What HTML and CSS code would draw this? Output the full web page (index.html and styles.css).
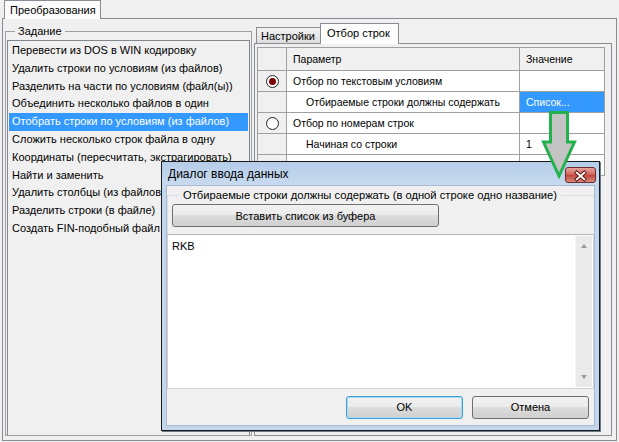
FILE: index.html
```html
<!DOCTYPE html>
<html>
<head>
<meta charset="utf-8">
<link rel="stylesheet" href="styles.css">
</head>
<body>
<div class="app">
  <div class="main-tabs">
    <div class="main-tab">Преобразования</div>
  </div>
  <div class="main-page">
    <div class="task-group">
      <div class="group-label">Задание</div>
      <ul class="task-list">
        <li>Перевести из DOS в WIN кодировку</li>
        <li>Удалить строки по условиям (из файлов)</li>
        <li>Разделить на части по условиям (файл(ы))</li>
        <li>Объединить несколько файлов в один</li>
        <li class="selected">Отобрать строки по условиям (из файлов)</li>
        <li>Сложить несколько строк файла в одну</li>
        <li>Координаты (пересчитать, экстрагировать)</li>
        <li>Найти и заменить</li>
        <li>Удалить столбцы (из файлов)</li>
        <li>Разделить строки (в файле)</li>
        <li>Создать FIN-подобный файл</li>
      </ul>
    </div>
    <div class="settings">
      <div class="sub-tabs">
        <div class="sub-tab">Настройки</div>
        <div class="sub-tab active">Отбор строк</div>
      </div>
      <div class="sub-page">
        <table class="grid">
          <colgroup><col class="c1"><col class="c2"><col class="c3"></colgroup>
          <tr class="head"><td class="ind"></td><td>Параметр</td><td>Значение</td></tr>
          <tr><td class="ind"><span class="radio on"></span></td><td>Отбор по текстовым условиям</td><td></td></tr>
          <tr><td class="ind"></td><td class="sub">Отбираемые строки должны содержать</td><td class="sel">Список...</td></tr>
          <tr><td class="ind"><span class="radio"></span></td><td>Отбор по номерам строк</td><td></td></tr>
          <tr><td class="ind"></td><td class="sub">Начиная со строки</td><td>1</td></tr>
          <tr><td class="ind"></td><td class="sub">Заканчивая строкой</td><td>1</td></tr>
        </table>
      </div>
    </div>
  </div>

  <div class="dialog">
    <div class="titlebar">
      <span class="title">Диалог ввода данных</span>
      <span class="close">
        <svg width="31" height="16" viewBox="0 0 31 16"><path d="M11.5 4.5 L19.5 11.5 M19.5 4.5 L11.5 11.5" stroke="#5a1a1a" stroke-width="4" stroke-linecap="square"/><path d="M11.5 4.5 L19.5 11.5 M19.5 4.5 L11.5 11.5" stroke="#fff" stroke-width="2" stroke-linecap="square"/></svg>
      </span>
    </div>
    <div class="client">
      <div class="dlg-group">
        <span class="dlg-group-label">Отбираемые строки должны содержать (в одной строке одно название)</span>
        <button class="btn paste">Вставить список из буфера</button>
      </div>
      <div class="memo">
        <div class="memo-text">RKB</div>
        <div class="scroll">
          <span class="arr up"></span>
          <span class="arr down"></span>
        </div>
      </div>
      <div class="buttons">
        <button class="btn ok">OK</button>
        <button class="btn cancel">Отмена</button>
      </div>
    </div>
  </div>

  <svg class="arrow" width="40" height="72" viewBox="0 0 40 72">
    <polygon points="9.5,1.5 26.5,1.5 26.5,31 33.5,31 18,65 2.5,31 9.5,31" fill="#c3c3c3" stroke="#22b14c" stroke-width="3" stroke-linejoin="miter"/>
  </svg>
</div>
</body>
</html>
```
FILE: styles.css
```css
* { box-sizing: border-box; }
html, body { margin: 0; padding: 0; }
body {
  width: 619px;
  height: 442px;
  overflow: hidden;
  background: #f0f0f0;
  font-family: "Liberation Sans", Arial, sans-serif;
  font-size: 11px;
  color: #000;
}
.app { position: relative; width: 619px; height: 442px; }

.main-tabs { height: 18px; display: flex; padding-left: 4px; }
.main-tab {
  height: 19px;
  padding: 3px 5px 0 5px;
  border: 1px solid #898c95;
  border-bottom: none;
  background: #fcfcfc;
  position: relative;
  z-index: 1;
  width: 97px;
  white-space: nowrap;
}
.main-page {
  margin-left: 2px;
  width: 615px;
  height: 423px;
  border: 1px solid #898c95;
  background: #f0f0f0;
  display: flex;
  padding: 12px 4px 4px 2px;
  gap: 2px;
}

.task-group {
  width: 247px;
  border: 1px solid #a0a0a0;
  position: relative;
  padding: 8px 1px 0 1px;
}
.group-label {
  position: absolute;
  top: -8px;
  left: 9px;
  padding: 0 3px;
  background: #f0f0f0;
  line-height: 14px;
}
.task-list {
  list-style: none;
  margin: 0;
  padding: 1px 1px;
  height: 100%;
  border: 1px solid #828790;
  border-bottom: none;
}
.task-list li {
  height: 17.8px;
  line-height: 17.8px;
  padding-left: 3px;
  white-space: nowrap;
}
.task-list li.selected { background: #3399ff; color: #fff; }

.settings { flex: 1; display: flex; flex-direction: column; margin-top: -8px; }
.sub-tabs { display: flex; height: 20px; align-items: flex-end; padding-left: 2px; }
.sub-tab {
  height: 17px;
  padding: 2px 4px 0 4px;
  border: 1px solid #898c95;
  border-bottom: none;
  background: linear-gradient(#f2f2f2, #dcdcdc);
  margin-bottom: -1px;
  width: 65px;
  white-space: nowrap;
}
.sub-tab.active {
  height: 21px;
  width: 79px;
  background: #fcfcfc;
  position: relative;
  z-index: 1;
  padding-top: 3px;
  padding-left: 6px;
  margin-left: -1px;
}
.sub-page {
  flex: 1;
  border: 1px solid #898c95;
  padding: 3px 6px 0 2px;
  background: #f0f0f0;
  overflow: hidden;
}
.grid {
  border-collapse: collapse;
  table-layout: fixed;
  width: 347px;
  background: #fff;
  font-size: 10.5px;
}
.grid col.c1 { width: 29px; }
.grid col.c2 { width: 233px; }
.grid col.c3 { width: 85px; }
.grid td {
  border: 1px solid #a0a0a0;
  height: 21px;
  padding: 0 0 0 6px;
  white-space: nowrap;
  overflow: hidden;
}
.grid tr.head td { background: #f0f0f0; height: 23px; }
.grid td.ind { background: #f0f0f0; padding: 0; text-align: center; }
.grid td.sub { padding-left: 19px; }
.grid td.sel { background: #3399ff; color: #fff; }
.radio {
  display: inline-block;
  width: 13px;
  height: 13px;
  border: 1px solid #222;
  border-radius: 50%;
  background: #fff;
  vertical-align: middle;
  position: relative;
  margin-left: 1px;
}
.radio.on::after {
  content: "";
  position: absolute;
  left: 2px; top: 2px;
  width: 7px; height: 7px;
  border-radius: 50%;
  background: #7a0000;
}

.dialog {
  position: absolute;
  left: 161px;
  top: 161px;
  width: 439px;
  height: 270px;
  border: 1px solid #1a1a1a;
  background: #c3d6ec;
  padding: 0 4px 4px 4px;
  display: flex;
  flex-direction: column;
  box-shadow: 1px 1px 0 #6b7a8a;
}
.titlebar {
  height: 23px;
  display: flex;
  align-items: center;
  justify-content: space-between;
  background: linear-gradient(#b5cde8, #c7daef);
  margin: 0 -4px;
  padding: 0 3px 0 6px;
}
.title { font-size: 12px; color: #000; }
.close {
  width: 31px;
  height: 16px;
  border: 1px solid #6c2d2d;
  border-radius: 3px;
  background: linear-gradient(#e6a79f, #cf5c52 50%, #c2433a 51%, #d88a7c);
  display: flex;
  margin-top: 2px;
}
.client {
  flex: 1;
  background: #f0f0f0;
  border: 1px solid #a9bcd2;
  display: flex;
  flex-direction: column;
}
.dlg-group {
  margin: 9px 0 0 0;
  border-top: 1px solid #d5dfe5;
  border-left: 1px solid #d5dfe5;
  position: relative;
  padding: 8px 0 7px 4px;
}
.dlg-group-label {
  position: absolute;
  top: -8px;
  left: 11px;
  padding: 0 4px;
  background: #f0f0f0;
  line-height: 14px;
  font-size: 11.2px;
  white-space: nowrap;
}
.btn {
  font-family: "Liberation Sans", Arial, sans-serif;
  font-size: 11px;
  color: #000;
  border: 1px solid #707070;
  border-radius: 3px;
  background: linear-gradient(#f2f2f2 0%, #ebebeb 45%, #dddddd 50%, #cfcfcf 100%);
  height: 23px;
  padding: 0;
}
.paste { width: 267px; display: block; }
.memo {
  flex: 1;
  background: #fff;
  border: 1px solid #d0d0d0;
  border-top-color: #b5b5b5;
  display: flex;
}
.memo-text { flex: 1; padding: 5px 4px; }
.scroll {
  width: 17px;
  margin: 1px 1px 1px 0;
  background: #eaeaea;
  border-left: 1px solid #f5f5f5;
  position: relative;
}
.arr {
  position: absolute;
  left: 5px;
  width: 0; height: 0;
  border-left: 3.5px solid transparent;
  border-right: 3.5px solid transparent;
}
.arr.up { top: 8px; border-bottom: 4px solid #9a9a9a; }
.arr.down { bottom: 8px; border-top: 4px solid #9a9a9a; }
.buttons {
  height: 36px;
  display: flex;
  justify-content: flex-end;
  align-items: center;
  gap: 9px;
  padding-right: 5px;
}
.btn.ok { width: 117px; border-color: #3c9fd8; box-shadow: inset 0 0 0 1px #a6dcf5; }
.btn.cancel { width: 117px; }

.arrow {
  position: absolute;
  left: 541px;
  top: 111px;
}
```
